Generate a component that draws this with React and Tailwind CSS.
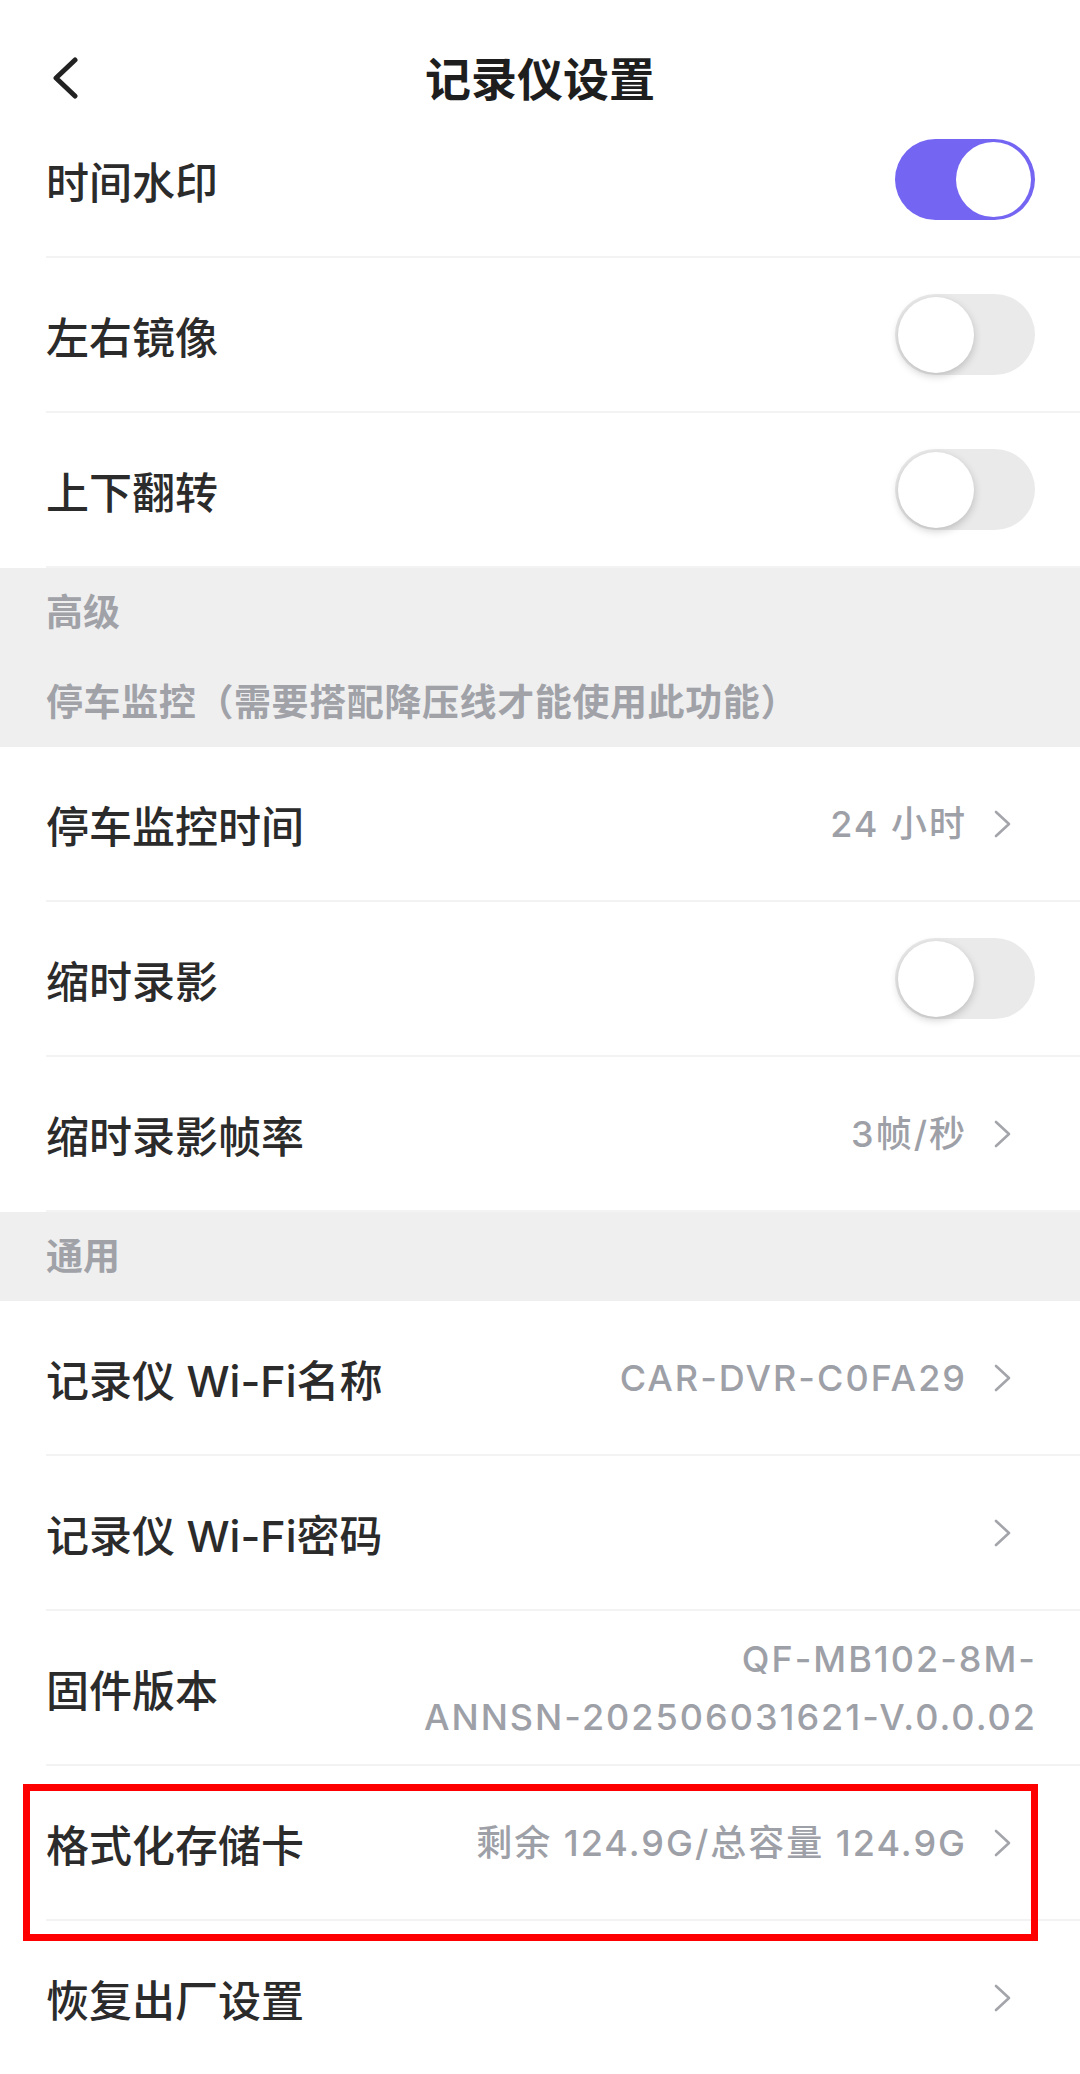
import React from "react";

const Chevron = () => (
  <svg className="ml-[27px]" width="18" height="28" viewBox="0 0 18 28" fill="none">
    <path
      d="M2 2 L15 14 L2 26"
      stroke="#a3a5ab"
      strokeWidth="2.6"
      strokeLinecap="round"
      strokeLinejoin="round"
    />
  </svg>
);

const Toggle = ({ on }) =>
  on ? (
    <div className="flex h-[81px] w-[140px] items-center justify-end rounded-full bg-[#7465f2] pr-[4px]">
      <div className="h-[75px] w-[75px] rounded-full bg-white" />
    </div>
  ) : (
    <div className="flex h-[81px] w-[140px] items-center rounded-full bg-[#eaeaeb] pl-[3px]">
      <div className="h-[76px] w-[76px] rounded-full bg-white shadow-[0_3px_8px_rgba(0,0,0,0.2)]" />
    </div>
  );

const Row = ({ label, value, toggle, chevron, children }) => (
  <div className="pl-[46px]">
    <div
      className={`flex h-[155px] items-center justify-between border-b-2 border-[#f3f3f4] ${
        chevron ? "pr-[68px]" : "pr-[45px]"
      }`}
    >
      <span className="mt-[8px] text-[43px] font-medium text-[#2b2b2b]">{label}</span>
      <div className="flex items-center">
        {toggle !== undefined && <Toggle on={toggle} />}
        {value && (
          <span className="text-[36px] font-medium tracking-[2px] text-[#9ea0a7]">
            {value}
          </span>
        )}
        {children}
        {chevron && <Chevron />}
      </div>
    </div>
  </div>
);

export default function App() {
  return (
    <div
      className="w-[1080px] h-[2074px] overflow-hidden bg-white"
      style={{ fontFamily: 'Inter, "Noto Sans CJK SC", sans-serif' }}
    >
      {/* header */}
      <div className="relative flex h-[103px] justify-center pt-[52px]">
        <svg
          className="absolute left-[51px] top-[57px]"
          width="28"
          height="42"
          viewBox="0 0 28 42"
          fill="none"
        >
          <path
            d="M24 3 L5 21 L24 39"
            stroke="#222"
            strokeWidth="5"
            strokeLinecap="round"
            strokeLinejoin="round"
          />
        </svg>
        <span className="text-[46px] font-bold leading-[54px] text-[#1e1e1e]">
          记录仪设置
        </span>
      </div>

      <Row label="时间水印" toggle={true} />
      <Row label="左右镜像" toggle={false} />
      <Row label="上下翻转" toggle={false} />

      <div className="flex h-[179px] flex-col justify-center gap-[52px] bg-[#efeff0] pl-[46px] text-[37px] font-bold text-[#a0a2a8]">
        <span className="leading-[38px]">高级</span>
        <span className="leading-[38px] tracking-[0.6px]">停车监控（需要搭配降压线才能使用此功能）</span>
      </div>

      <Row label="停车监控时间" value="24 小时" chevron />
      <Row label="缩时录影" toggle={false} />
      <Row label="缩时录影帧率" value="3帧/秒" chevron />

      <div className="flex h-[89px] items-center bg-[#efeff0] pl-[46px] text-[37px] font-bold text-[#a0a2a8]">
        通用
      </div>

      <Row label="记录仪 Wi-Fi名称" value="CAR-DVR-C0FA29" chevron />
      <Row label="记录仪 Wi-Fi密码" chevron />
      <Row label="固件版本">
        <span className="-mr-[2px] text-right text-[36px] font-medium leading-[58px] tracking-[2px] text-[#9ea0a7]">
          QF-MB102-8M-
          <br />
          ANNSN-202506031621-V.0.0.02
        </span>
      </Row>
      <div className="relative">
        <Row label="格式化存储卡" value="剩余 124.9G/总容量 124.9G" chevron />
        <div className="pointer-events-none absolute left-[23px] top-[18px] h-[157px] w-[1015px] border-[7px] border-[#ff0000]" />
      </div>
      <Row label="恢复出厂设置" chevron />
    </div>
  );
}
